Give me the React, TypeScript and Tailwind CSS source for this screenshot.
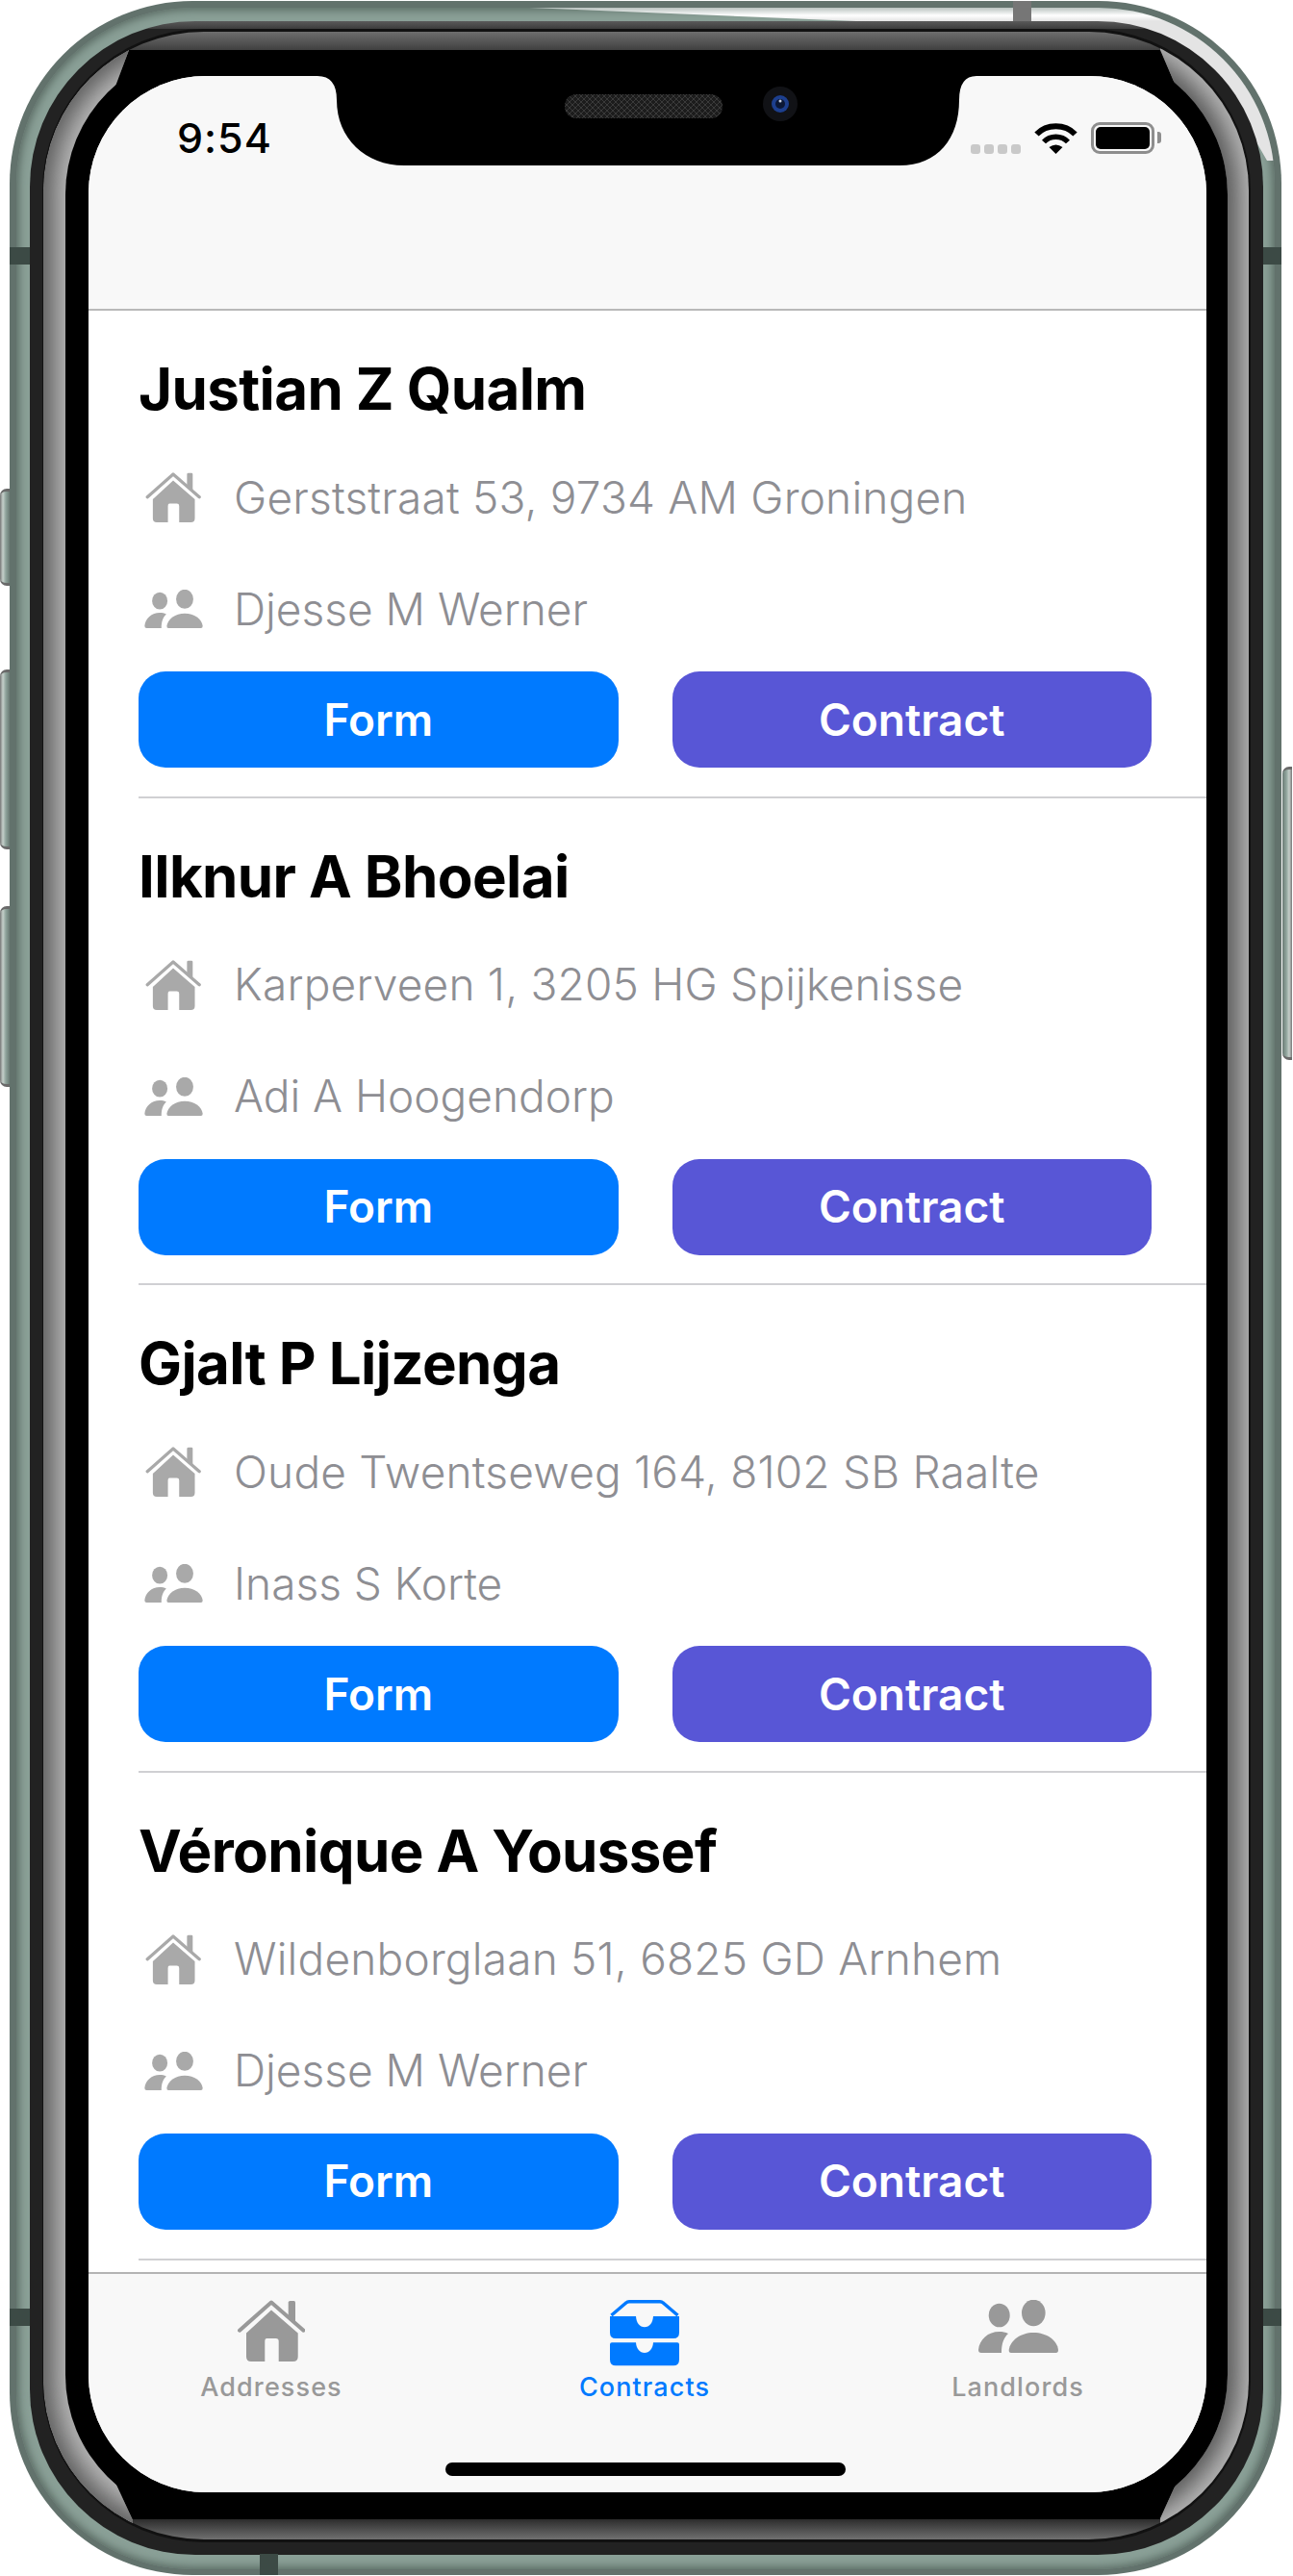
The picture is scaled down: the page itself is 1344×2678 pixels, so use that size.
import React from "react";

const ROWS = [
  { name: "Justian Z Qualm", address: "Gerststraat 53, 9734 AM Groningen", owner: "Djesse M Werner" },
  { name: "Ilknur A Bhoelai", address: "Karperveen 1, 3205 HG Spijkenisse", owner: "Adi A Hoogendorp" },
  { name: "Gjalt P Lijzenga", address: "Oude Twentseweg 164, 8102 SB Raalte", owner: "Inass S Korte" },
  { name: "Véronique A Youssef", address: "Wildenborglaan 51, 6825 GD Arnhem", owner: "Djesse M Werner" },
];

const HouseIcon = ({ className }: { className: string }) => (
  <svg viewBox="0 0 70 64" className={className} fill="currentColor">
    <path d="M2 31.7 35 2.500 68.500 31.700" fill="none" stroke="currentColor" strokeWidth="4" strokeLinecap="round" strokeLinejoin="round" />
    <path d="M54.500 1H58.500Q60 1 60 2.500V26L52.700 19V2.500Q52.700 1 54.500 1Z" />
    <path fillRule="evenodd" d="M35 10.500 62.700 34.500V59q0 5-5 5H42.700V43q0-3-3-3h-9.400q-2 0-2 3V64H14q-5 0-5-5V34.500Z" />
  </svg>
);

const PeopleIcon = ({ className }: { className: string }) => (
  <svg viewBox="0 0 83 55" className={className} fill="currentColor">
    <ellipse cx="21.700" cy="16" rx="11" ry="12.300" />
    <ellipse cx="57.300" cy="13.500" rx="12.300" ry="13.800" />
    <path d="M31.700 52C33 42 44 34 57.300 34 71 34 82 42 83 52q0 3-2.500 3H34q-2.500 0-2.300-3Z" />
    <path d="M0 52C1 41 10 33 21.700 33c3.300 0 6.300.6 9.300 2-4.500 4-7 10-7 20H3q-3 0-3-3Z" />
  </svg>
);

const TrayIcon = ({ className }: { className: string }) => (
  <svg viewBox="0 0 72 69" className={className} fill="currentColor">
    <path d="M1.500 16 17 2.800Q18 1.700 20 1.700H52q2 0 3 1.100L70.500 16" fill="none" stroke="currentColor" strokeWidth="3.400" />
    <path d="M0 17H27C27.500 24 31 28.300 36 28.300S44.500 24 45 17H72V34q0 6-6 6H6q-6 0-6-6Z" />
    <path d="M2 44.300H27C27.500 51 31 55 36 55s8.500-4 9-10.700H70q2 0 2 2V62q0 6.300-6 6.300H6q-6 0-6-6.300V46.300q0-2 2-2Z" />
  </svg>
);

const Notch = () => (
  <svg viewBox="0 0 700 93" className="absolute left-[233px] top-0 w-[700px] h-[93px]">
    <defs>
      <pattern id="mesh" width="6" height="6" patternUnits="userSpaceOnUse">
        <rect width="6" height="6" fill="#1c1c1c" />
        <path d="M0 0 6 6M6 0 0 6" stroke="#3a3a3a" strokeWidth="1" />
      </pattern>
    </defs>
    <path d="M5 0Q25 0 25 25C25 65 55 93 95 93H610C650 93 672 65 672 25Q672 0 690 0Z" fill="#000" />
    <rect x="262" y="19" width="164" height="25" rx="12" fill="url(#mesh)" />
    <circle cx="486" cy="29" r="18" fill="#111216" />
    <circle cx="486" cy="29" r="9" fill="#1d3f8e" />
    <circle cx="486" cy="29" r="5" fill="#0c1836" />
    <circle cx="486" cy="26" r="1.500" fill="#c8d0e0" />
  </svg>
);

const StatusBar = () => (
  <div className="flex items-start justify-between pt-[48px] pl-[92px] pr-[47px] text-black">
    <span className="text-[43px] leading-[33px] font-medium tracking-[1px]">9:54</span>
    <div className="flex items-start">
      <div className="flex gap-[4px] mt-[23px] mr-[14px]">
        {[0, 1, 2, 3].map((i) => (
          <div key={i} className="w-[10px] h-[10px] rounded-[3px] bg-[#c9c9c9]" />
        ))}
      </div>
      <svg viewBox="0 0 45 33" className="w-[45px] h-[33px] mr-[14px]">
        <path d="M2.500 12.500C13 1.500 32 1.500 42.500 12.500" fill="none" stroke="#000" strokeWidth="6" />
        <path d="M10 20.500C16.500 13.500 28.500 13.500 35 20.500" fill="none" stroke="#000" strokeWidth="5.500" />
        <path d="M15.500 26Q22.500 21 29.500 26L22.500 33Z" fill="#000" />
      </svg>
      <div className="w-[66px] h-[33px] rounded-[9px] border-[3px] border-[#8e8e8e] p-[2px]">
        <div className="w-full h-full rounded-[5px] bg-black" />
      </div>
      <div className="w-[4px] h-[12px] mt-[10px] ml-[3px] rounded-r-[3px] bg-[#8e8e8e]" />
    </div>
  </div>
);

const ContractRow = ({ name, address, owner }: { name: string; address: string; owner: string }) => (
  <div className="h-[506.67px] shrink-0 pl-[52px]">
    <div className="h-full border-b-2 border-[#d0d0d3] pt-[45px]">
      <div className="h-[72px] flex items-center text-[60px] font-bold text-black tracking-[-0.6px] whitespace-nowrap">{name}</div>
      <div className="mt-[19px] h-[116px] flex items-center text-[46px] font-light text-[#8e8e93]">
        <HouseIcon className="w-[58px] h-[52px] ml-[7px] mr-[34px] text-[#a9a9a9]" />
        <span className="whitespace-nowrap tracking-[0.2px]">{address}</span>
      </div>
      <div className="h-[116px] flex items-center text-[46px] font-light text-[#8e8e93]">
        <PeopleIcon className="w-[61px] h-[40px] ml-[6px] mr-[32px] text-[#a9a9a9]" />
        <span className="whitespace-nowrap">{owner}</span>
      </div>
      <div className="mt-[7px] flex gap-[56px] pr-[57px]">
        <div className="flex-1 h-[100px] rounded-[28px] bg-[#007aff] flex items-center justify-center text-white text-[46px] font-semibold">Form</div>
        <div className="flex-1 h-[100px] rounded-[28px] bg-[#5856d6] flex items-center justify-center text-white text-[46px] font-semibold">Contract</div>
      </div>
    </div>
  </div>
);

const TabBar = () => (
  <div className="h-[229px] shrink-0 bg-[#f8f8f8] border-t-2 border-[#b4b4b4] flex flex-col">
    <div className="grid grid-cols-[388px_388px_388px] -ml-[4px] w-[1164px] pt-[27px] text-[27px] font-medium tracking-[1.1px] leading-[32px]">
      <div className="flex flex-col items-center text-[#999999]">
        <div className="h-[75px]"><HouseIcon className="w-[70px] h-[64px]" /></div>
        <span>Addresses</span>
      </div>
      <div className="flex flex-col items-center text-[#007aff]">
        <div className="h-[75px]"><TrayIcon className="w-[72px] h-[69px]" /></div>
        <span>Contracts</span>
      </div>
      <div className="flex flex-col items-center text-[#999999]">
        <div className="h-[75px]"><PeopleIcon className="w-[83px] h-[55px]" /></div>
        <span>Landlords</span>
      </div>
    </div>
    <div className="mt-auto mb-[17px] mr-[4px] self-center w-[416px] h-[14px] rounded-full bg-black" />
  </div>
);

const sideButton = "absolute w-[10px] rounded-[7px] border-y-[3px] border-[#6a6a6a] bg-[linear-gradient(to_right,#767676,#c6d0cb_30%,#8fa49c_60%,#6b7b75)]";

export default function App() {
  return (
    <div className="relative w-[1344px] h-[2678px] overflow-hidden bg-white pt-[1px] pl-[10px] font-['Inter',sans-serif]">
      {/* side buttons */}
      <div className={`${sideButton} left-0 top-[508px] h-[101px] rounded-r-none`} />
      <div className={`${sideButton} left-0 top-[696px] h-[187px] rounded-r-none`} />
      <div className={`${sideButton} left-0 top-[942px] h-[188px] rounded-r-none`} />
      <div className={`${sideButton} left-[1333px] top-[797px] h-[305px] rounded-l-none rotate-180`} />

      {/* frame */}
      <div className="relative w-[1322px] h-[2676px] rounded-[190px] bg-[#62726c] pt-[7px] pl-[7px] pr-[7px] pb-[6px]">
        <div className="relative h-full rounded-[183px] bg-[#8aa097] shadow-[inset_0_0_10px_2px_#56665f] pt-[14px] pl-[14px] pr-[12px] pb-[15px]">
          <div className="absolute inset-0 rounded-[183px] bg-[linear-gradient(to_bottom,#b9c2bf,#ffffff_8px,#e4e4e4_14px)] [clip-path:polygon(533px_0,873px_14px,1083px_40px,1273px_112px,1300px_159px,1308px_159px,1308px_0)]" />

          <div className="relative h-full rounded-[172px] bg-[linear-gradient(to_bottom,#5a5a5a_0,#3c3c3c_8px,#222222_8px)] pt-[8px] pl-[13px] pr-[13px] pb-[13px]">
            <div className="relative h-full overflow-hidden rounded-[168px] border-l border-r-2 border-y-[3px] border-[#111111] bg-[linear-gradient(to_bottom,#6e6e6e_0,#404040_19px,#000000_19px,#000000_calc(100%_-_21px),#2c2c2c_calc(100%_-_21px),#707070_100%)] pt-[19px] pl-[23px] pr-[22px] pb-[21px]">
              {/* silver side strips */}
              <div className="absolute inset-0 rounded-[165px] bg-[#b4b4b4] shadow-[inset_0_0_22px_11px_#5f5f5f] [clip-path:polygon(0_0,89px_0,89px_19px,70px_70px,70px_calc(100%_-_70px),93px_calc(100%_-_20px),93px_100%,0_100%)]" />
              <div className="absolute inset-0 overflow-hidden bg-[#b4b4b4] [clip-path:polygon(calc(100%_-_92px)_19px,calc(100%_-_92px)_0,100%_0,100%_100%,calc(100%_-_92px)_100%,calc(100%_-_92px)_calc(100%_-_22px),calc(100%_-_70px)_calc(100%_-_70px),calc(100%_-_70px)_70px)]">
                <div className="absolute left-[23px] top-[19px] right-[22px] bottom-[21px] rounded-[150px] shadow-[0_0_22px_11px_#5a5a5a]" />
              </div>

              <div className="relative h-full rounded-[150px] bg-black pt-[27px] pl-[24px] pr-[22px] pb-[28px]">
                {/* screen */}
                <div className="relative h-full overflow-hidden rounded-[122px] bg-white flex flex-col">
                  <div className="h-[244px] shrink-0 bg-[#f8f8f8] border-b-2 border-[#b8b8b8]">
                    <StatusBar />
                  </div>
                  <div className="flex-1 min-h-0 overflow-hidden flex flex-col">
                    {ROWS.map((r) => (
                      <ContractRow key={r.name} {...r} />
                    ))}
                  </div>
                  <TabBar />
                  <Notch />
                </div>
              </div>
            </div>
          </div>
        </div>

        {/* antenna lines */}
        <div className="absolute left-0 top-[256px] w-[21px] h-[18px] bg-[#3c4a45]" />
        <div className="absolute right-0 top-[256px] w-[19px] h-[18px] bg-[#3c4a45]" />
        <div className="absolute left-0 top-[2399px] w-[21px] h-[18px] bg-[#3c4a45]" />
        <div className="absolute right-0 top-[2399px] w-[19px] h-[18px] bg-[#3c4a45]" />
        <div className="absolute left-[260px] bottom-0 w-[19px] h-[22px] bg-[#3c4a45]" />
        <div className="absolute left-[1043px] top-0 w-[19px] h-[21px] bg-[#767676]" />
      </div>
    </div>
  );
}
